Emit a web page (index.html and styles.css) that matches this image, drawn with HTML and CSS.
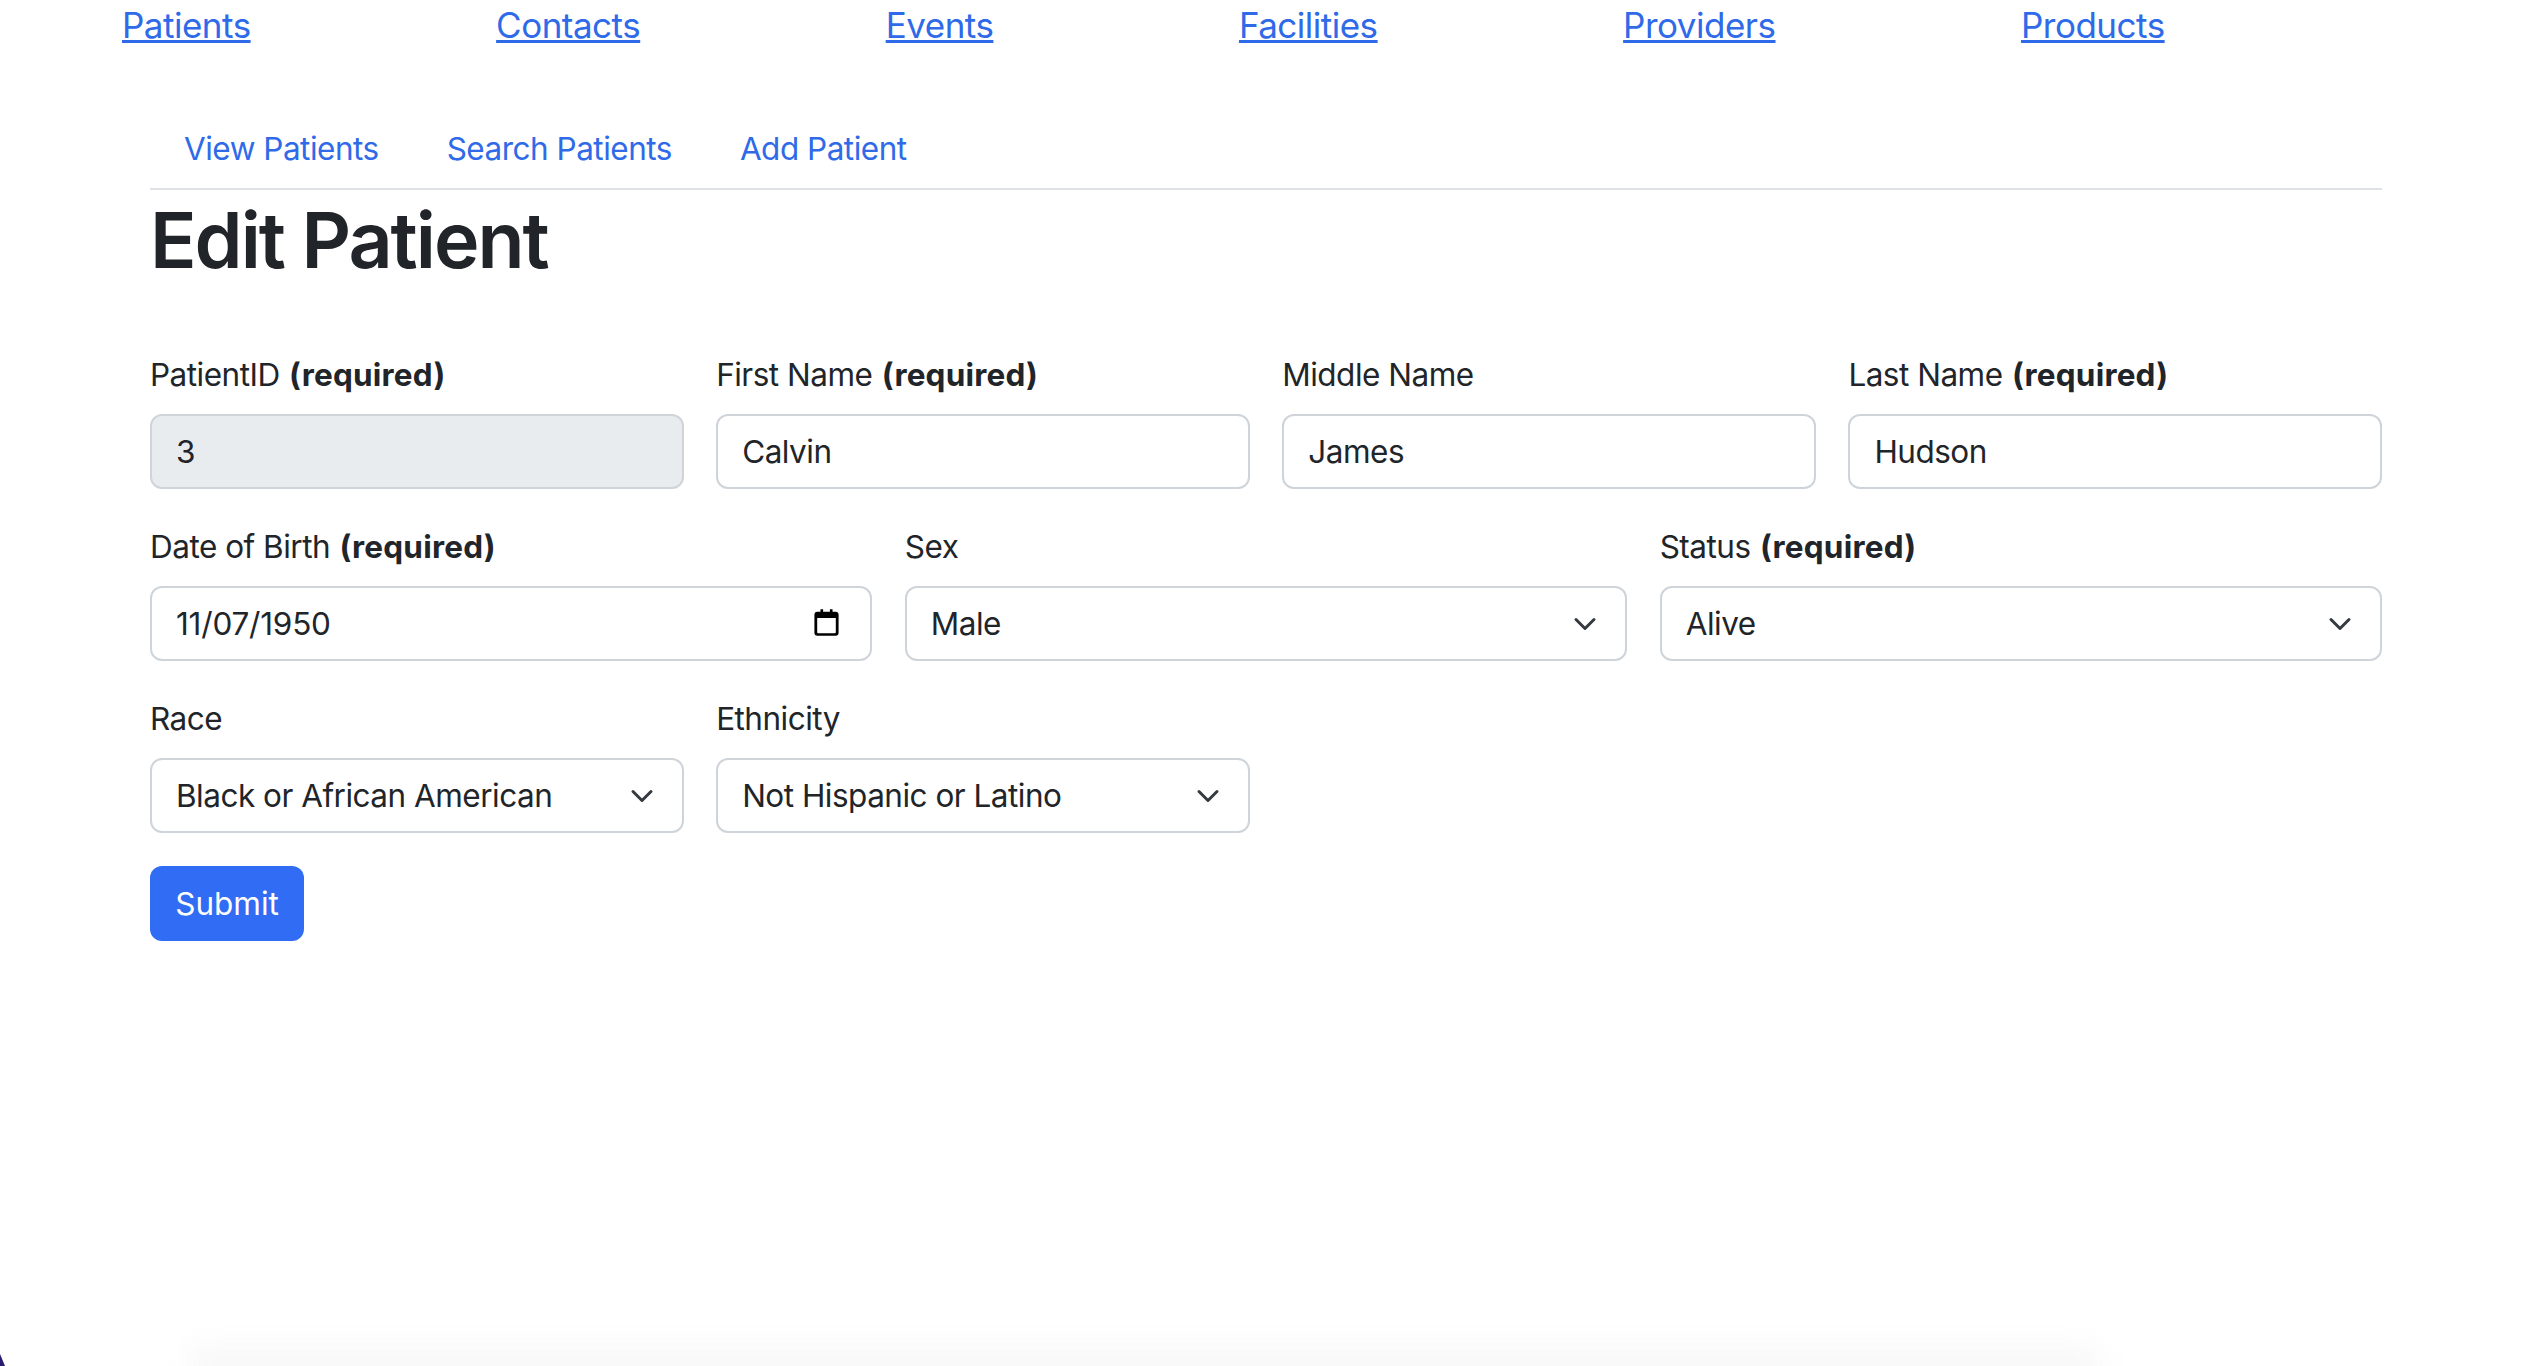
FILE: index.html
```html
<!DOCTYPE html>
<html lang="en">
<head>
<meta charset="utf-8">
<title>Edit Patient</title>
<link rel="stylesheet" href="styles.css">
</head>
<body>
<nav class="main-nav">
  <a href="#">Patients</a>
  <a href="#">Contacts</a>
  <a href="#">Events</a>
  <a href="#">Facilities</a>
  <a href="#">Providers</a>
  <a href="#">Products</a>
</nav>
<main class="container">
  <ul class="tabs">
    <li><a href="#">View Patients</a></li>
    <li><a href="#">Search Patients</a></li>
    <li><a href="#">Add Patient</a></li>
  </ul>
  <h1>Edit Patient</h1>
  <form class="form">
    <div class="row cols-4">
      <div class="field"><label>PatientID <b>(required)</b></label><input class="control disabled" value="3" disabled></div>
      <div class="field"><label>First Name <b>(required)</b></label><input class="control" value="Calvin"></div>
      <div class="field"><label>Middle Name</label><input class="control" value="James"></div>
      <div class="field"><label>Last Name <b>(required)</b></label><input class="control" value="Hudson"></div>
    </div>
    <div class="row cols-3">
      <div class="field"><label>Date of Birth <b>(required)</b></label>
        <div class="wrap"><input class="control date" value="11/07/1950">
          <svg class="cal" viewBox="0 0 24 24" aria-hidden="true"><path fill="#000" d="M7 1h2.2v2h5.6V1H17v2h2.5A2.5 2.5 0 0 1 22 5.500v15a2.500 2.500 0 0 1-2.500 2.500h-15A2.500 2.500 0 0 1 2 20.500v-15A2.500 2.500 0 0 1 4.500 3H7zM4.300 8.200v11.800c0 .5.300.8.800.8h13.800c.5 0 .8-.3.800-.8V8.200z"/></svg>
        </div>
      </div>
      <div class="field"><label>Sex</label>
        <div class="wrap"><select class="control"><option>Male</option></select>
          <svg class="chev" viewBox="0 0 16 16" aria-hidden="true"><path d="m2 5 6 6 6-6"/></svg></div>
      </div>
      <div class="field"><label>Status <b>(required)</b></label>
        <div class="wrap"><select class="control"><option>Alive</option></select>
          <svg class="chev" viewBox="0 0 16 16" aria-hidden="true"><path d="m2 5 6 6 6-6"/></svg></div>
      </div>
    </div>
    <div class="row cols-4">
      <div class="field"><label>Race</label>
        <div class="wrap"><select class="control"><option>Black or African American</option></select>
          <svg class="chev" viewBox="0 0 16 16" aria-hidden="true"><path d="m2 5 6 6 6-6"/></svg></div>
      </div>
      <div class="field"><label>Ethnicity</label>
        <div class="wrap"><select class="control"><option>Not Hispanic or Latino</option></select>
          <svg class="chev" viewBox="0 0 16 16" aria-hidden="true"><path d="m2 5 6 6 6-6"/></svg></div>
      </div>
    </div>
    <button type="button" class="btn">Submit</button>
  </form>
</main>
<div class="bottom-shade"></div>
<div class="corner"></div>
</body>
</html>
```
FILE: styles.css
```css
* { box-sizing: border-box; }
html, body { height: 100%; }
body {
  margin: 0;
  background: #fff;
  color: #212529;
  font-family: Inter, "Liberation Sans", sans-serif;
  font-size: 31.5px;
  letter-spacing: -0.5px;
  line-height: 47px;
  overflow: hidden;
  position: relative;
}
a { color: #2f6ae8; }
.main-nav {
  display: flex;
  gap: 245.500px;
  padding-left: 122px;
  height: 50px;
  font-size: 35px;
  letter-spacing: -0.5px;
  line-height: 50px;
}
.container { padding: 0 144px 0 150px; }
.tabs {
  list-style: none;
  display: flex;
  margin: 66px 0 0;
  padding: 0;
  height: 74px;
  border-bottom: 2px solid #dee2e6;
}
.tabs a {
  display: block;
  padding: 9px 34px 0;
  text-decoration: none;
}
h1 {
  margin: 0;
  padding-top: 3px;
  font-size: 77px;
  font-weight: 600;
  line-height: 95px;
  letter-spacing: -2px;
  height: 161px;
}
.form { display: flex; flex-direction: column; }
.row { display: grid; column-gap: 32.5px; margin-bottom: 34px; }
.cols-4 { grid-template-columns: repeat(4, 1fr); }
.cols-3 { grid-template-columns: repeat(3, 1fr); }
.field { display: flex; flex-direction: column; }
label { display: block; height: 47px; margin-bottom: 16px; }
b { font-weight: 700; letter-spacing: 0.2px; margin-left: 1px; }
.wrap { position: relative; }
.control {
  display: block;
  width: 100%;
  height: 75px;
  padding: 0 24px;
  border: 2px solid #ced4da;
  border-radius: 12px;
  background: #fff;
  color: #212529;
  font: inherit;
  letter-spacing: inherit;
  appearance: none;
  opacity: 1;
}
.date { letter-spacing: -0.2px; }
.disabled { background: #e9ecef; }
.chev {
  position: absolute;
  right: 30px;
  top: 26px;
  width: 24px;
  height: 24px;
  fill: none;
  stroke: #343a40;
  stroke-width: 2;
  stroke-linecap: round;
  stroke-linejoin: round;
}
.cal {
  position: absolute;
  right: 31px;
  top: 22px;
  width: 29px;
  height: 29px;
}
.btn {
  align-self: flex-start;
  width: 154px;
  height: 75px;
  margin-top: -1px;
  padding: 0;
  border: 0;
  border-radius: 12px;
  background: #316cf4;
  color: #fff;
  font: inherit;
  letter-spacing: 0;
}
.bottom-shade {
  position: absolute;
  left: 190px;
  width: 1910px;
  bottom: -30px;
  height: 50px;
  background: #f8f8f8;
  filter: blur(14px);
}
.corner {
  position: absolute;
  left: 0;
  bottom: 0;
  width: 5px;
  height: 12px;
  background: #2a1a70;
  clip-path: polygon(0 0, 100% 100%, 0 100%);
}
```
